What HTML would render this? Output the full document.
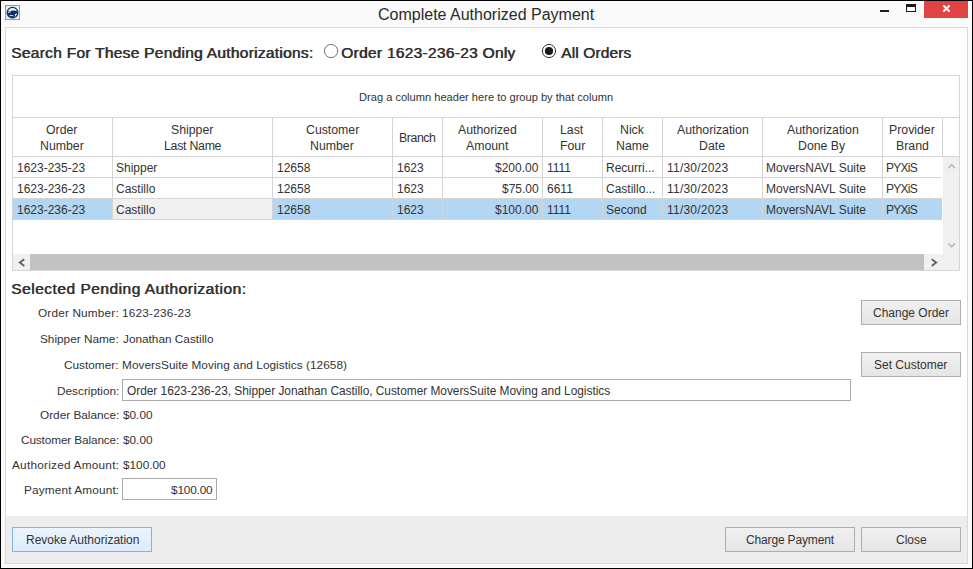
<!DOCTYPE html>
<html><head><meta charset="utf-8"><style>
html,body{margin:0;padding:0;}
body{width:973px;height:569px;position:relative;overflow:hidden;background:#000;font-family:"Liberation Sans", sans-serif;}
.t{position:absolute;line-height:1;white-space:nowrap;}
.r{position:absolute;display:block;}
</style></head><body>
<div class="r" style="left:0px;top:0px;width:973px;height:569px;background:#000"></div>
<div class="r" style="left:1px;top:1px;width:971px;height:567px;background:#fafafa"></div>
<svg class="r" style="left:5px;top:5px" width="15" height="15" viewBox="0 0 15 15">
<rect x="0.5" y="0.5" width="14" height="14" fill="#e6ebf2" stroke="#8c9cb6"/>
<defs><clipPath id="ic"><circle cx="7.5" cy="7.6" r="4.9"/></clipPath></defs>
<circle cx="7.5" cy="7.6" r="4.9" fill="#eef2f8"/>
<g clip-path="url(#ic)">
<path d="M2 6.3 L5.8 6.5 Q6.8 5.0 7.6 5.6 L10.5 5.7 L12.8 6.4 L12.8 8.0 L10.2 9.0 L9.4 10.2 L10 14 L2 14 Z" fill="#0b2d6a"/>
<rect x="2.8" y="6.9" width="2.6" height="0.8" fill="#e8eef6"/>
<path d="M4.6 10.4 L8.4 10.6" stroke="#e8eef6" stroke-width="0.9"/>
<circle cx="9.4" cy="10.4" r="0.7" fill="#0b2d6a"/>
</g>
<circle cx="7.5" cy="7.6" r="5.3" fill="none" stroke="#0b2d6a" stroke-width="1.3"/>
</svg>
<div class="t" style="left:378px;top:7px;font-size:16.0px;color:#2b2b2b">Complete Authorized Payment</div>
<div class="r" style="left:880px;top:10px;width:9px;height:2px;background:#1e1e1e"></div>
<div class="r" style="left:906px;top:4px;width:10px;height:8px;box-sizing:border-box;border:1px solid #1a1a1a;border-top-width:3px;background:#fff"></div>
<div class="r" style="left:924px;top:1px;width:44px;height:17px;background:#e04343"></div>
<svg class="r" style="left:943px;top:5px" width="7" height="7" viewBox="0 0 7 7">
<path d="M1 1 L6 6 M6 1 L1 6" stroke="#fff" stroke-width="2" stroke-linecap="square"/>
</svg>
<div class="r" style="left:5px;top:27px;width:963px;height:537px;box-sizing:border-box;border:1px solid #d9d9d9;background:#fff"></div>
<div class="r" style="left:6px;top:516px;width:961px;height:47px;background:#ededed"></div>
<div class="t" style="left:11px;top:45px;font-size:15.5px;text-shadow:0.6px 0 0 #333;letter-spacing:0.282px;color:#333">Search For These Pending Authorizations:</div>
<svg class="r" style="left:323px;top:43px" width="16" height="16" viewBox="0 0 16 16">
<circle cx="8" cy="8" r="6.6" fill="#fff" stroke="#707070" stroke-width="1"/></svg>
<div class="t" style="left:341px;top:45px;font-size:15.5px;text-shadow:0.6px 0 0 #333;letter-spacing:0.286px;color:#333">Order 1623-236-23 Only</div>
<svg class="r" style="left:541px;top:43px" width="16" height="16" viewBox="0 0 16 16">
<circle cx="8" cy="8" r="6.6" fill="#fff" stroke="#333" stroke-width="1"/>
<circle cx="8" cy="8" r="4.1" fill="#1a1a1a"/></svg>
<div class="t" style="left:561px;top:45px;font-size:15.5px;text-shadow:0.6px 0 0 #333;letter-spacing:0.111px;color:#333">All Orders</div>
<div class="r" style="left:12px;top:75px;width:948px;height:196px;box-sizing:border-box;border:1px solid #d5d5d5;background:#fff"></div>
<div class="t" style="left:359px;top:92px;font-size:11.1px;color:#333">Drag a column header here to group by that column</div>
<div class="r" style="left:13px;top:117px;width:946px;height:1px;background:#d5d5d5"></div>
<div class="r" style="left:13px;top:156px;width:946px;height:1px;background:#d5d5d5"></div>
<div class="r" style="left:112px;top:117px;width:1px;height:40px;background:#d5d5d5"></div>
<div class="r" style="left:272px;top:117px;width:1px;height:40px;background:#d5d5d5"></div>
<div class="r" style="left:392px;top:117px;width:1px;height:40px;background:#d5d5d5"></div>
<div class="r" style="left:442px;top:117px;width:1px;height:40px;background:#d5d5d5"></div>
<div class="r" style="left:542px;top:117px;width:1px;height:40px;background:#d5d5d5"></div>
<div class="r" style="left:602px;top:117px;width:1px;height:40px;background:#d5d5d5"></div>
<div class="r" style="left:662px;top:117px;width:1px;height:40px;background:#d5d5d5"></div>
<div class="r" style="left:762px;top:117px;width:1px;height:40px;background:#d5d5d5"></div>
<div class="r" style="left:882px;top:117px;width:1px;height:40px;background:#d5d5d5"></div>
<div class="r" style="left:942px;top:117px;width:1px;height:40px;background:#d5d5d5"></div>
<div class="t" style="left:46px;top:124px;font-size:12.3px;color:#333">Order</div>
<div class="t" style="left:40px;top:140px;font-size:12.3px;color:#333">Number</div>
<div class="t" style="left:171px;top:124px;font-size:12.3px;color:#333">Shipper</div>
<div class="t" style="left:164px;top:140px;font-size:12.3px;letter-spacing:-0.25px;color:#333">Last Name</div>
<div class="t" style="left:306px;top:124px;font-size:12.3px;color:#333">Customer</div>
<div class="t" style="left:310px;top:140px;font-size:12.3px;color:#333">Number</div>
<div class="t" style="left:399px;top:132px;font-size:12.3px;letter-spacing:-0.4px;color:#333">Branch</div>
<div class="t" style="left:458px;top:124px;font-size:12.3px;color:#333">Authorized</div>
<div class="t" style="left:466px;top:140px;font-size:12.3px;color:#333">Amount</div>
<div class="t" style="left:560px;top:124px;font-size:12.3px;color:#333">Last</div>
<div class="t" style="left:560px;top:140px;font-size:12.3px;color:#333">Four</div>
<div class="t" style="left:620px;top:124px;font-size:12.3px;color:#333">Nick</div>
<div class="t" style="left:616px;top:140px;font-size:12.3px;color:#333">Name</div>
<div class="t" style="left:677px;top:124px;font-size:12.3px;color:#333">Authorization</div>
<div class="t" style="left:699px;top:140px;font-size:12.3px;color:#333">Date</div>
<div class="t" style="left:787px;top:124px;font-size:12.3px;color:#333">Authorization</div>
<div class="t" style="left:798px;top:140px;font-size:12.3px;color:#333">Done By</div>
<div class="t" style="left:889px;top:124px;font-size:12.3px;color:#333">Provider</div>
<div class="t" style="left:896px;top:140px;font-size:12.3px;color:#333">Brand</div>
<div class="r" style="left:13px;top:177px;width:929px;height:1px;background:#d5d5d5"></div>
<div class="r" style="left:112px;top:157px;width:1px;height:21px;background:#d5d5d5"></div>
<div class="r" style="left:272px;top:157px;width:1px;height:21px;background:#d5d5d5"></div>
<div class="r" style="left:392px;top:157px;width:1px;height:21px;background:#d5d5d5"></div>
<div class="r" style="left:442px;top:157px;width:1px;height:21px;background:#d5d5d5"></div>
<div class="r" style="left:542px;top:157px;width:1px;height:21px;background:#d5d5d5"></div>
<div class="r" style="left:602px;top:157px;width:1px;height:21px;background:#d5d5d5"></div>
<div class="r" style="left:662px;top:157px;width:1px;height:21px;background:#d5d5d5"></div>
<div class="r" style="left:762px;top:157px;width:1px;height:21px;background:#d5d5d5"></div>
<div class="r" style="left:882px;top:157px;width:1px;height:21px;background:#d5d5d5"></div>
<div class="t" style="left:17px;top:162px;font-size:12.0px;color:#333">1623-235-23</div>
<div class="t" style="left:116px;top:162px;font-size:12.0px;color:#333">Shipper</div>
<div class="t" style="left:277px;top:162px;font-size:12.0px;color:#333">12658</div>
<div class="t" style="left:397px;top:162px;font-size:12.0px;color:#333">1623</div>
<div class="t" style="left:495px;top:162px;font-size:12.0px;color:#333">$200.00</div>
<div class="t" style="left:547px;top:162px;font-size:12.0px;color:#333">1111</div>
<div class="t" style="left:606px;top:162px;font-size:12.0px;color:#333">Recurri...</div>
<div class="t" style="left:667px;top:162px;font-size:12.0px;letter-spacing:0.222px;color:#333">11/30/2023</div>
<div class="t" style="left:766px;top:162px;font-size:12.0px;color:#333">MoversNAVL Suite</div>
<div class="t" style="left:886px;top:162px;font-size:12.0px;letter-spacing:-0.75px;color:#333">PYXiS</div>
<div class="r" style="left:13px;top:198px;width:929px;height:1px;background:#d5d5d5"></div>
<div class="r" style="left:112px;top:178px;width:1px;height:21px;background:#d5d5d5"></div>
<div class="r" style="left:272px;top:178px;width:1px;height:21px;background:#d5d5d5"></div>
<div class="r" style="left:392px;top:178px;width:1px;height:21px;background:#d5d5d5"></div>
<div class="r" style="left:442px;top:178px;width:1px;height:21px;background:#d5d5d5"></div>
<div class="r" style="left:542px;top:178px;width:1px;height:21px;background:#d5d5d5"></div>
<div class="r" style="left:602px;top:178px;width:1px;height:21px;background:#d5d5d5"></div>
<div class="r" style="left:662px;top:178px;width:1px;height:21px;background:#d5d5d5"></div>
<div class="r" style="left:762px;top:178px;width:1px;height:21px;background:#d5d5d5"></div>
<div class="r" style="left:882px;top:178px;width:1px;height:21px;background:#d5d5d5"></div>
<div class="t" style="left:17px;top:183px;font-size:12.0px;color:#333">1623-236-23</div>
<div class="t" style="left:116px;top:183px;font-size:12.0px;color:#333">Castillo</div>
<div class="t" style="left:277px;top:183px;font-size:12.0px;color:#333">12658</div>
<div class="t" style="left:397px;top:183px;font-size:12.0px;color:#333">1623</div>
<div class="t" style="left:502px;top:183px;font-size:12.0px;color:#333">$75.00</div>
<div class="t" style="left:547px;top:183px;font-size:12.0px;color:#333">6611</div>
<div class="t" style="left:606px;top:183px;font-size:12.0px;color:#333">Castillo...</div>
<div class="t" style="left:667px;top:183px;font-size:12.0px;letter-spacing:0.222px;color:#333">11/30/2023</div>
<div class="t" style="left:766px;top:183px;font-size:12.0px;color:#333">MoversNAVL Suite</div>
<div class="t" style="left:886px;top:183px;font-size:12.0px;letter-spacing:-0.75px;color:#333">PYXiS</div>
<div class="r" style="left:13px;top:199px;width:929px;height:20px;background:#b3d6f2"></div>
<div class="r" style="left:113px;top:199px;width:159px;height:20px;background:#f0f0f0"></div>
<div class="r" style="left:13px;top:219px;width:929px;height:1px;background:#d5d5d5"></div>
<div class="r" style="left:112px;top:199px;width:1px;height:21px;background:#d5d5d5"></div>
<div class="r" style="left:272px;top:199px;width:1px;height:21px;background:#d5d5d5"></div>
<div class="r" style="left:392px;top:199px;width:1px;height:21px;background:#d5d5d5"></div>
<div class="r" style="left:442px;top:199px;width:1px;height:21px;background:#d5d5d5"></div>
<div class="r" style="left:542px;top:199px;width:1px;height:21px;background:#d5d5d5"></div>
<div class="r" style="left:602px;top:199px;width:1px;height:21px;background:#d5d5d5"></div>
<div class="r" style="left:662px;top:199px;width:1px;height:21px;background:#d5d5d5"></div>
<div class="r" style="left:762px;top:199px;width:1px;height:21px;background:#d5d5d5"></div>
<div class="r" style="left:882px;top:199px;width:1px;height:21px;background:#d5d5d5"></div>
<div class="t" style="left:17px;top:204px;font-size:12.0px;color:#333">1623-236-23</div>
<div class="t" style="left:116px;top:204px;font-size:12.0px;color:#333">Castillo</div>
<div class="t" style="left:277px;top:204px;font-size:12.0px;color:#333">12658</div>
<div class="t" style="left:397px;top:204px;font-size:12.0px;color:#333">1623</div>
<div class="t" style="left:495px;top:204px;font-size:12.0px;color:#333">$100.00</div>
<div class="t" style="left:547px;top:204px;font-size:12.0px;color:#333">1111</div>
<div class="t" style="left:606px;top:204px;font-size:12.0px;color:#333">Second</div>
<div class="t" style="left:667px;top:204px;font-size:12.0px;letter-spacing:0.222px;color:#333">11/30/2023</div>
<div class="t" style="left:766px;top:204px;font-size:12.0px;color:#333">MoversNAVL Suite</div>
<div class="t" style="left:886px;top:204px;font-size:12.0px;letter-spacing:-0.75px;color:#333">PYXiS</div>
<div class="r" style="left:943px;top:157px;width:16px;height:97px;background:#f0f0f0"></div>
<div class="r" style="left:13px;top:254px;width:946px;height:16px;background:#f0f0f0"></div>
<div class="r" style="left:30px;top:254px;width:894px;height:16px;background:#c2c2c2"></div>
<svg class="r" style="left:13px;top:254px" width="17" height="16"><path d="M11.3 5.3 L6.8 8.6 L11.3 11.9" fill="none" stroke="#606060" stroke-width="1.8"/></svg>
<svg class="r" style="left:926px;top:254px" width="17" height="16"><path d="M5.7 5.3 L10.2 8.6 L5.7 11.9" fill="none" stroke="#606060" stroke-width="1.8"/></svg>
<svg class="r" style="left:943px;top:157px" width="16" height="97"><path d="M5.3 11.2 L8.7 7.6 L12.1 11.2" fill="none" stroke="#b9b9b9" stroke-width="1.6"/><path d="M5.3 86.3 L8.7 89.9 L12.1 86.3" fill="none" stroke="#b9b9b9" stroke-width="1.6"/></svg>
<div class="t" style="left:11px;top:281px;font-size:15.5px;text-shadow:0.6px 0 0 #333;letter-spacing:0.5px;color:#333">Selected Pending Authorization:</div>
<div class="t" style="left:38px;top:308px;font-size:11.8px;letter-spacing:0.167px;color:#333">Order Number:</div>
<div class="t" style="left:40px;top:334px;font-size:11.8px;color:#333">Shipper Name:</div>
<div class="t" style="left:64px;top:360px;font-size:11.8px;color:#333">Customer:</div>
<div class="t" style="left:57px;top:386px;font-size:11.8px;color:#333">Description:</div>
<div class="t" style="left:40px;top:410px;font-size:11.8px;color:#333">Order Balance:</div>
<div class="t" style="left:21px;top:435px;font-size:11.8px;letter-spacing:-0.125px;color:#333">Customer Balance:</div>
<div class="t" style="left:12px;top:460px;font-size:11.8px;letter-spacing:0.235px;color:#333">Authorized Amount:</div>
<div class="t" style="left:24px;top:485px;font-size:11.8px;letter-spacing:0.143px;color:#333">Payment Amount:</div>
<div class="t" style="left:122px;top:308px;font-size:11.8px;letter-spacing:0.2px;color:#333">1623-236-23</div>
<div class="t" style="left:123px;top:334px;font-size:11.8px;color:#333">Jonathan Castillo</div>
<div class="t" style="left:122px;top:360px;font-size:11.8px;letter-spacing:0.051px;color:#333">MoversSuite Moving and Logistics (12658)</div>
<div class="r" style="left:122px;top:379px;width:729px;height:22px;box-sizing:border-box;border:1px solid #ababab;background:#fff"></div>
<div class="t" style="left:127px;top:386px;font-size:11.9px;letter-spacing:-0.023px;color:#333">Order 1623-236-23, Shipper Jonathan Castillo, Customer MoversSuite Moving and Logistics</div>
<div class="t" style="left:123px;top:410px;font-size:11.8px;color:#333">$0.00</div>
<div class="t" style="left:123px;top:435px;font-size:11.8px;color:#333">$0.00</div>
<div class="t" style="left:123px;top:460px;font-size:11.8px;color:#333">$100.00</div>
<div class="r" style="left:122px;top:478px;width:95px;height:22px;box-sizing:border-box;border:1px solid #ababab;background:#fff"></div>
<div class="t" style="left:171px;top:485px;font-size:11.8px;letter-spacing:-0.167px;color:#333">$100.00</div>
<div class="r" style="left:861px;top:300px;width:100px;height:25px;box-sizing:border-box;border:1px solid #adadad;background:linear-gradient(#f0f0f0,#e5e5e5)"></div>
<div class="t" style="left:873px;top:307px;font-size:12.0px;color:#333">Change Order</div>
<div class="r" style="left:861px;top:352px;width:100px;height:25px;box-sizing:border-box;border:1px solid #adadad;background:linear-gradient(#f0f0f0,#e5e5e5)"></div>
<div class="t" style="left:874px;top:359px;font-size:12.0px;color:#333">Set Customer</div>
<div class="r" style="left:12px;top:527px;width:140px;height:25px;box-sizing:border-box;border:1px solid #7eb4ea;background:linear-gradient(#ecf4fc,#dcecfc)"></div>
<div class="t" style="left:26px;top:534px;font-size:12.0px;color:#333">Revoke Authorization</div>
<div class="r" style="left:725px;top:527px;width:130px;height:25px;box-sizing:border-box;border:1px solid #adadad;background:linear-gradient(#f0f0f0,#e5e5e5)"></div>
<div class="t" style="left:746px;top:534px;font-size:12.0px;letter-spacing:-0.154px;color:#333">Charge Payment</div>
<div class="r" style="left:861px;top:527px;width:100px;height:25px;box-sizing:border-box;border:1px solid #adadad;background:linear-gradient(#f0f0f0,#e5e5e5)"></div>
<div class="t" style="left:896px;top:534px;font-size:12.0px;color:#333">Close</div>
</body></html>
